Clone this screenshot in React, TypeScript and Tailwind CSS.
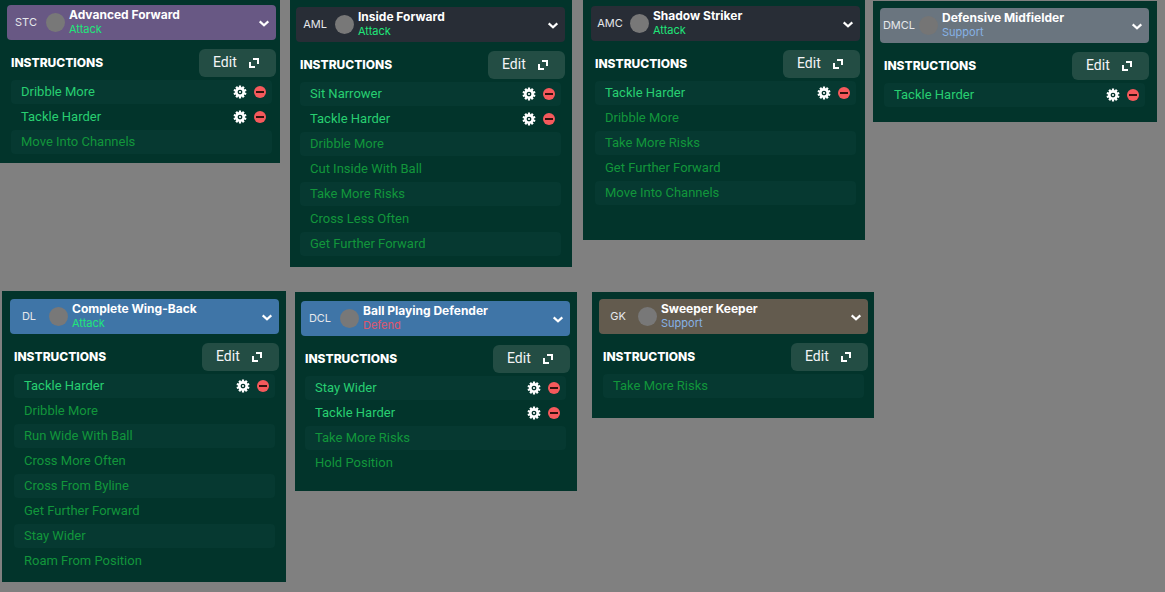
import React from "react";
import clsx from "clsx";

const duties: Record<string, string> = {
  Attack: "text-[#1fe67a]",
  Support: "text-[#86b2e6]",
  Defend: "text-[#e0566c]"
};

const frontRow = [
  {
    pos: "STC",
    role: "Advanced Forward",
    duty: "Attack",
    bar: "bg-[#685884]",
    dot: "bg-[#787878]",
    card: "pt-[5px] pr-1 pb-2 pl-[7px]",
    active: ["Dribble More", "Tackle Harder"],
    fixed: ["Move Into Channels"]
  },
  {
    pos: "AML",
    role: "Inside Forward",
    duty: "Attack",
    bar: "bg-[#282d36]",
    dot: "bg-[#787878]",
    card: "ml-[10px] pt-[7px] pr-[7px] pb-[10px] pl-[6px]",
    active: ["Sit Narrower", "Tackle Harder"],
    fixed: [
      "Dribble More",
      "Cut Inside With Ball",
      "Take More Risks",
      "Cross Less Often",
      "Get Further Forward"
    ]
  },
  {
    pos: "AMC",
    role: "Shadow Striker",
    duty: "Attack",
    bar: "bg-[#282d36]",
    dot: "bg-[#787878]",
    card: "ml-[11px] pt-[6px] pr-[5px] pb-[34px] pl-2",
    active: ["Tackle Harder"],
    fixed: [
      "Dribble More",
      "Take More Risks",
      "Get Further Forward",
      "Move Into Channels"
    ]
  },
  {
    pos: "DMCL",
    role: "Defensive Midfielder",
    duty: "Support",
    bar: "bg-[#6a757f]",
    dot: "bg-[#757575]",
    card: "ml-2 mt-px pt-[7px] pr-2 pb-[14px] pl-[7px]",
    active: ["Tackle Harder"],
    fixed: []
  }
];

const backRow = [
  {
    pos: "DL",
    role: "Complete Wing-Back",
    duty: "Attack",
    bar: "bg-[#3f75a7]",
    dot: "bg-[#787878]",
    card: "pt-2 pr-[7px] pb-2 pl-2",
    active: ["Tackle Harder"],
    fixed: [
      "Dribble More",
      "Run Wide With Ball",
      "Cross More Often",
      "Cross From Byline",
      "Get Further Forward",
      "Stay Wider",
      "Roam From Position"
    ]
  },
  {
    pos: "DCL",
    role: "Ball Playing Defender",
    duty: "Defend",
    bar: "bg-[#3f75a7]",
    dot: "bg-[#787878]",
    card: "ml-[9px] mt-px pt-[9px] pr-[7px] pb-[15px] pl-[6px]",
    active: ["Stay Wider", "Tackle Harder"],
    fixed: ["Take More Risks", "Hold Position"]
  },
  {
    pos: "GK",
    role: "Sweeper Keeper",
    duty: "Support",
    bar: "bg-[#635b4e]",
    dot: "bg-[#787878]",
    card: "ml-[15px] mt-px pt-[7px] pr-[6px] pb-[19px] pl-[7px]",
    active: [],
    fixed: ["Take More Risks"]
  }
];

export default function App() {
  return (
    <main className="min-h-screen bg-[#808080] font-['Roboto',sans-serif]">
      <div className="grid grid-cols-[280fr_292fr_293fr_292fr] items-start pr-2">
        {frontRow.map((player) => (
          <RoleCard key={player.pos} {...player} />
        ))}
      </div>
      <div className="grid grid-cols-[284fr_291fr_297fr_291fr] items-start mt-6 pl-[2px]">
        {backRow.map((player) => (
          <RoleCard key={player.pos} {...player} />
        ))}
      </div>
    </main>
  );
}

const RoleCard = ({ pos, role, duty, bar, dot, card, active, fixed }: any) => {
  return (
    <section className={clsx("min-w-0 bg-[#02342b]", card)}>
      <button
        type="button"
        aria-haspopup="listbox"
        className={clsx(
          "flex items-center w-full h-[35px] rounded-[4px] pr-[6px] text-left",
          bar
        )}
      >
        <span className="w-[38px] shrink-0 flex justify-center text-[11px] text-gray-200 font-['Inter',sans-serif]">
          {pos}
        </span>
        <span className={clsx("h-[19px] w-[19px] ml-px shrink-0 rounded-full", dot)} />
        <span className="flex flex-col grow ml-1 pb-px whitespace-nowrap font-['Inter',sans-serif]">
          <span className="text-[12px] leading-[15px] font-bold text-white">{role}</span>
          <span className={clsx("text-[11px] leading-[15px]", duties[duty])}>{duty}</span>
        </span>
        <ChevronIcon />
      </button>

      <div className="flex items-center justify-between mt-[9px] pl-1">
        <h2 className="text-[12px] font-extrabold text-white font-['Inter',sans-serif]">
          INSTRUCTIONS
        </h2>
        <button
          type="button"
          className="flex items-center justify-between w-[77px] h-7 rounded-[6px] bg-[#234d44] pl-[14px] pr-[17px] text-[14px] text-gray-100"
        >
          <span className="pb-[2px]">Edit</span>
          <ExpandIcon />
        </button>
      </div>

      <ul className="flex flex-col gap-px mt-[3px] mx-1 pb-px">
        {active.map((name: string) => (
          <Instruction key={name} name={name} editable />
        ))}
        {fixed.map((name: string) => (
          <Instruction key={name} name={name} />
        ))}
      </ul>
    </section>
  );
};

const Instruction = ({ name, editable }: any) => {
  return (
    <li className="flex items-center h-6 rounded-[4px] pl-[10px] pr-[6px] odd:bg-[#063931]">
      <span
        className={clsx(
          "grow text-[13px] leading-5 whitespace-nowrap",
          editable ? "text-[#28cf71]" : "text-[#12963b]"
        )}
      >
        {name}
      </span>
      {editable && (
        <div className="flex items-center gap-[7px]">
          <button type="button" aria-label={`Configure ${name}`}>
            <GearIcon />
          </button>
          <button type="button" aria-label={`Remove ${name}`}>
            <MinusIcon />
          </button>
        </div>
      )}
    </li>
  );
};

const ChevronIcon = () => (
  <svg width="12" height="12" viewBox="0 0 12 12" fill="none" stroke="#fff" strokeWidth="2.2">
    <path d="M1.7 4.4 6 8.2l4.3-3.8" />
  </svg>
);

const ExpandIcon = () => (
  <svg width="10" height="10" viewBox="0 0 10 10" fill="none" stroke="#fff" strokeWidth="2">
    <path d="M4 1h5v5M1 4v5h5" />
  </svg>
);

const teeth = [0, 36, 72, 108, 144];

const GearIcon = () => (
  <svg width="14" height="14" viewBox="-7 -7 14 14" className="block">
    {teeth.map((deg) => (
      <path key={deg} d="M-1.1-6.5h2.2v13h-2.2z" fill="#fff" transform={`rotate(${deg})`} />
    ))}
    <circle r="5" fill="#fff" />
    <circle r="1.7" fill="#fff" stroke="#03312a" strokeWidth="1.3" />
  </svg>
);

const MinusIcon = () => (
  <svg width="12" height="12" viewBox="0 0 12 12" className="block">
    <circle cx="6" cy="6" r="6" fill="#f6595c" />
    <path d="M2 5h8v2H2z" fill="#35120f" />
  </svg>
);
